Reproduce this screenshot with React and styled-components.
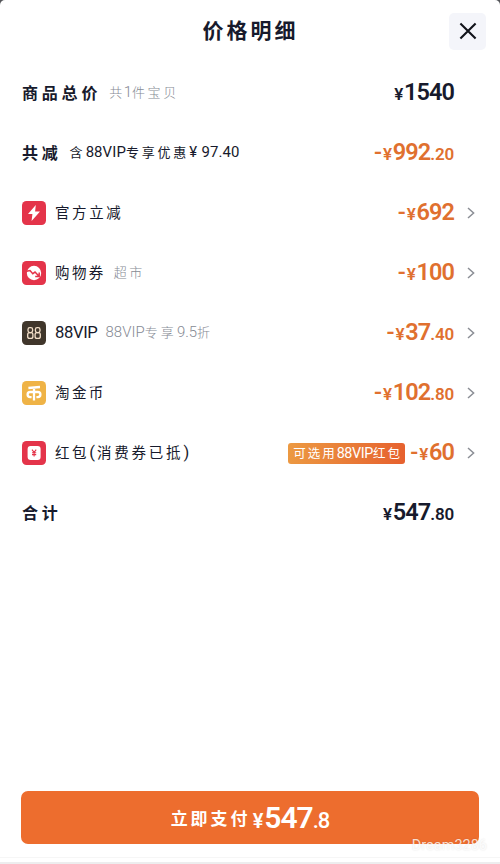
import React from 'react';
import styled, { createGlobalStyle, css } from 'styled-components';

const COLOR = {
  ink: '#171a2c',
  gray: '#868a94',
  orange: '#e0702f',
  button: '#ed6d2e',
  red: '#e4344a',
};

const ROWS = [
  { label: [['商品总价', 3.8]], bold: true, note: [['共', 1.5], ['1', 0, 1], ['件宝贝', 2.6]], whole: '1540', dark: true },
  {
    label: [['共减', 3.8]],
    bold: true,
    note: [['含', 3], ['88VIP', 0.1, 1], ['专享优惠', 2.8], ['¥', 4.6, 1], ['97.40', 0.1, 1]],
    darkNote: true,
    whole: '992',
    cents: '.20',
  },
  { icon: 'bolt', label: [['官方立减', 2.6]], whole: '692', link: true },
  { icon: 'coupon', label: [['购物券', 2.4]], note: [['超市', 2.6]], whole: '100', link: true },
  {
    icon: 'vip',
    label: [['88VIP', -0.4, 1]],
    note: [['88VIP', 0.1, 1], ['专享', 3], ['9.5', 0, 1], ['折', 0]],
    whole: '37',
    cents: '.40',
    link: true,
  },
  { icon: 'coin', label: [['淘金币', 2.4]], whole: '102', cents: '.80', link: true },
  {
    icon: 'packet',
    label: [['红包', 2.6], ['(', 2, 1], ['消费券已抵', 2.8], [')', 0, 1]],
    tag: [['可选用', 2], ['88VIP', -0.4, 1], ['红包', 2]],
    whole: '60',
    link: true,
  },
  { label: [['合计', 3.8]], bold: true, whole: '547', cents: '.80', dark: true },
];

function Text({ parts }) {
  return parts.map(([text, gap, latin], i) => (
    <StyledRun key={i} $gap={gap} $latin={latin}>
      {text}
    </StyledRun>
  ));
}

function Icon({ name }) {
  return (
    <StyledIcon viewBox="0 0 24 24">
      {name === 'bolt' && (
        <>
          <rect width="24" height="24" rx="4.5" fill={COLOR.red} />
          <path d="M13.8 4 6 13h4.4L9.6 20l8.4-9.6h-4.9z" fill="#fff" />
        </>
      )}
      {name === 'coupon' && (
        <>
          <rect width="24" height="24" rx="4.5" fill={COLOR.red} />
          <circle cx="12" cy="12" r="7.2" fill="#fff" />
          <path d="M4.5 10.2 8 9.5l2.8 3.2 2.2-1.6 3.8 4M13.2 15.4h4v-4" fill="none" stroke={COLOR.red} strokeWidth="1.5" />
        </>
      )}
      {name === 'vip' && (
        <>
          <rect width="24" height="24" rx="4.5" fill="#40362b" />
          <g fill="none" stroke="#f3dfc8" strokeWidth="1.3">
            <rect x="6" y="6.6" width="4.6" height="5" rx="1.8" />
            <rect x="5.7" y="11.6" width="5.2" height="5.8" rx="2" />
            <rect x="13.4" y="6.6" width="4.6" height="5" rx="1.8" />
            <rect x="13.1" y="11.6" width="5.2" height="5.8" rx="2" />
          </g>
        </>
      )}
      {name === 'coin' && (
        <>
          <rect width="24" height="24" rx="4.5" fill="#efb346" />
          <path d="M6.4 7 18 6M12 6.6V19.4M9.6 16.2H8.2a2.6 2.6 0 0 1 0-5.2h7.6a2.6 2.6 0 0 1 0 5.2h-1.4" fill="none" stroke="#fff" strokeWidth="2.3" />
        </>
      )}
      {name === 'packet' && (
        <>
          <rect width="24" height="24" rx="4.5" fill={COLOR.red} />
          <rect x="5.6" y="5" width="13" height="14" rx="3" fill="#fff" />
          <path d="m10 8.6 2.1 2.7 2.1-2.7M12.1 11.3v4.3M10 11.7h4.2M10 13.6h4.2" fill="none" stroke={COLOR.red} strokeWidth="1.1" />
        </>
      )}
    </StyledIcon>
  );
}

function App() {
  return (
    <>
      <GlobalStyle />
      <StyledPage>
        <StyledSheet>
          <StyledHeader>
            <StyledTitle>价格明细</StyledTitle>
            <StyledClose aria-label="关闭">
              <svg width="18" height="18" viewBox="0 0 18 18">
                <path d="m1.4 1.4 15.2 15.2M16.6 1.4 1.4 16.6" stroke="#11131a" strokeWidth="2.1" />
              </svg>
            </StyledClose>
          </StyledHeader>
          <StyledList>
            {ROWS.map((row, i) => (
              <StyledRow key={i}>
                {row.icon && <Icon name={row.icon} />}
                <StyledLabel $bold={row.bold}>
                  <Text parts={row.label} />
                </StyledLabel>
                {row.note && (
                  <StyledNote $dark={row.darkNote}>
                    <Text parts={row.note} />
                  </StyledNote>
                )}
                <StyledRight>
                  {row.tag && (
                    <StyledTag>
                      <Text parts={row.tag} />
                    </StyledTag>
                  )}
                  <StyledPrice $dark={row.dark}>
                    {!row.dark && <StyledMinus>-</StyledMinus>}
                    <StyledYen>¥</StyledYen>
                    {row.whole}
                    {row.cents && <StyledCents>{row.cents}</StyledCents>}
                  </StyledPrice>
                </StyledRight>
                <StyledArrow>
                  {row.link && (
                    <svg width="8" height="12" viewBox="0 0 8 12">
                      <path d="m1 1 5.6 5L1 11" fill="none" stroke="#8b8e95" strokeWidth="1.5" />
                    </svg>
                  )}
                </StyledArrow>
              </StyledRow>
            ))}
          </StyledList>
          <StyledFooter>
            <StyledPay>
              <StyledPayText>立即支付</StyledPayText>
              <StyledPayPrice>
                <StyledPayYen>¥</StyledPayYen>547<StyledPayCents>.8</StyledPayCents>
              </StyledPayPrice>
            </StyledPay>
            <StyledWatermark>Dream3286</StyledWatermark>
          </StyledFooter>
        </StyledSheet>
      </StyledPage>
    </>
  );
}

export default App;

const GlobalStyle = createGlobalStyle`
  body {
    margin: 0;
    background: #55565a;
    font-family: 'Noto Sans CJK SC', sans-serif;
  }
`;

const StyledPage = styled.div`
  height: 864px;
  overflow: hidden;
`;

const StyledSheet = styled.div`
  display: flex;
  flex-direction: column;
  height: 100%;
  box-sizing: border-box;
  background: #fff;
  border-radius: 5px 5px 0 0;
  border-bottom: 2px solid #ededee;
`;

const StyledHeader = styled.div`
  display: grid;
  grid-template-columns: 1fr auto 1fr;
  align-items: center;
  height: 62px;
  padding: 0 14px;
`;

const StyledTitle = styled.div`
  grid-column: 2;
  color: ${COLOR.ink};
  font-size: 21px;
  font-weight: 700;
  line-height: 30px;
  letter-spacing: 3px;
  margin: -4px -1px 0 0;
`;

const StyledClose = styled.button`
  display: flex;
  align-items: center;
  justify-content: center;
  justify-self: end;
  width: 37px;
  height: 37px;
  padding: 0;
  border: 0;
  border-radius: 5px;
  background: #f4f5fa;
`;

const StyledList = styled.div`
  padding: 1px 25px 0 22px;
`;

const StyledRow = styled.div`
  display: flex;
  align-items: center;
  height: 60px;
`;

const StyledIcon = styled.svg`
  flex: none;
  width: 24px;
  height: 24px;
  margin-right: 9px;
`;

const StyledRun = styled.span`
  letter-spacing: ${({ $gap }) => $gap}px;
  ${({ $latin }) =>
    $latin &&
    css`
      font-family: Roboto, sans-serif;
      font-size: 1.15em;
    `}
`;

const StyledLabel = styled.div`
  margin-top: -2px;
  color: ${COLOR.ink};
  font-size: ${({ $bold }) => ($bold ? 16 : 14.5)}px;
  font-weight: ${({ $bold }) => ($bold ? 700 : 400)};
  line-height: 24px;
  white-space: nowrap;
`;

const StyledNote = styled.div`
  margin: -2px 0 0 8px;
  color: ${({ $dark }) => ($dark ? COLOR.ink : COLOR.gray)};
  font-size: 13px;
  font-weight: ${({ $dark }) => ($dark ? 400 : 300)};
  line-height: 24px;
  white-space: nowrap;
`;

const StyledRight = styled.div`
  display: flex;
  align-items: center;
  gap: 5px;
  margin-left: auto;
`;

const StyledTag = styled.div`
  box-sizing: border-box;
  width: 117px;
  height: 21px;
  padding-left: 5px;
  border-radius: 3px;
  background: linear-gradient(100deg, #ec9a42, #e6602e);
  color: #fff;
  font-size: 12.5px;
  line-height: 20px;
  white-space: nowrap;
`;

const StyledPrice = styled.div`
  color: ${({ $dark }) => ($dark ? COLOR.ink : COLOR.orange)};
  font-family: Roboto, sans-serif;
  font-size: 23.5px;
  font-weight: 600;
  line-height: 28px;
  letter-spacing: -0.9px;
  white-space: nowrap;
`;

const StyledMinus = styled.span`
  margin-right: 2px;
  font-weight: 500;
`;

const StyledYen = styled.span`
  margin-right: 1.5px;
  font-size: 17px;
`;

const StyledCents = styled.span`
  font-size: 17px;
  letter-spacing: -0.2px;
`;

const StyledArrow = styled.div`
  display: flex;
  justify-content: flex-end;
  width: 21px;
`;

const StyledFooter = styled.div`
  position: relative;
  margin-top: auto;
  padding: 0 21px 13px 21px;
  border-bottom: 1px solid #f6f6f6;
  margin-bottom: 4px;
`;

const StyledPay = styled.button`
  display: flex;
  align-items: center;
  justify-content: center;
  width: 100%;
  height: 53px;
  padding: 0;
  border: 0;
  border-radius: 7px;
  background: ${COLOR.button};
  color: #fff;
`;

const StyledPayText = styled.span`
  font-family: 'Noto Sans CJK SC', sans-serif;
  font-size: 17px;
  font-weight: 700;
  letter-spacing: 3px;
`;

const StyledPayPrice = styled.span`
  margin-left: 2px;
  font-family: Roboto, sans-serif;
  font-size: 30px;
  font-weight: 600;
  letter-spacing: -1px;
`;

const StyledPayYen = styled.span`
  margin-right: 2px;
  font-size: 20px;
`;

const StyledPayCents = styled.span`
  font-size: 22px;
  font-weight: 500;
`;

const StyledWatermark = styled.div`
  position: absolute;
  right: 13px;
  bottom: 3px;
  color: rgba(255, 255, 255, 0.8);
  font-family: Roboto, sans-serif;
  font-size: 14.5px;
  line-height: 16px;
  text-shadow: 0 0 2px rgba(0, 0, 0, 0.12);
`;
